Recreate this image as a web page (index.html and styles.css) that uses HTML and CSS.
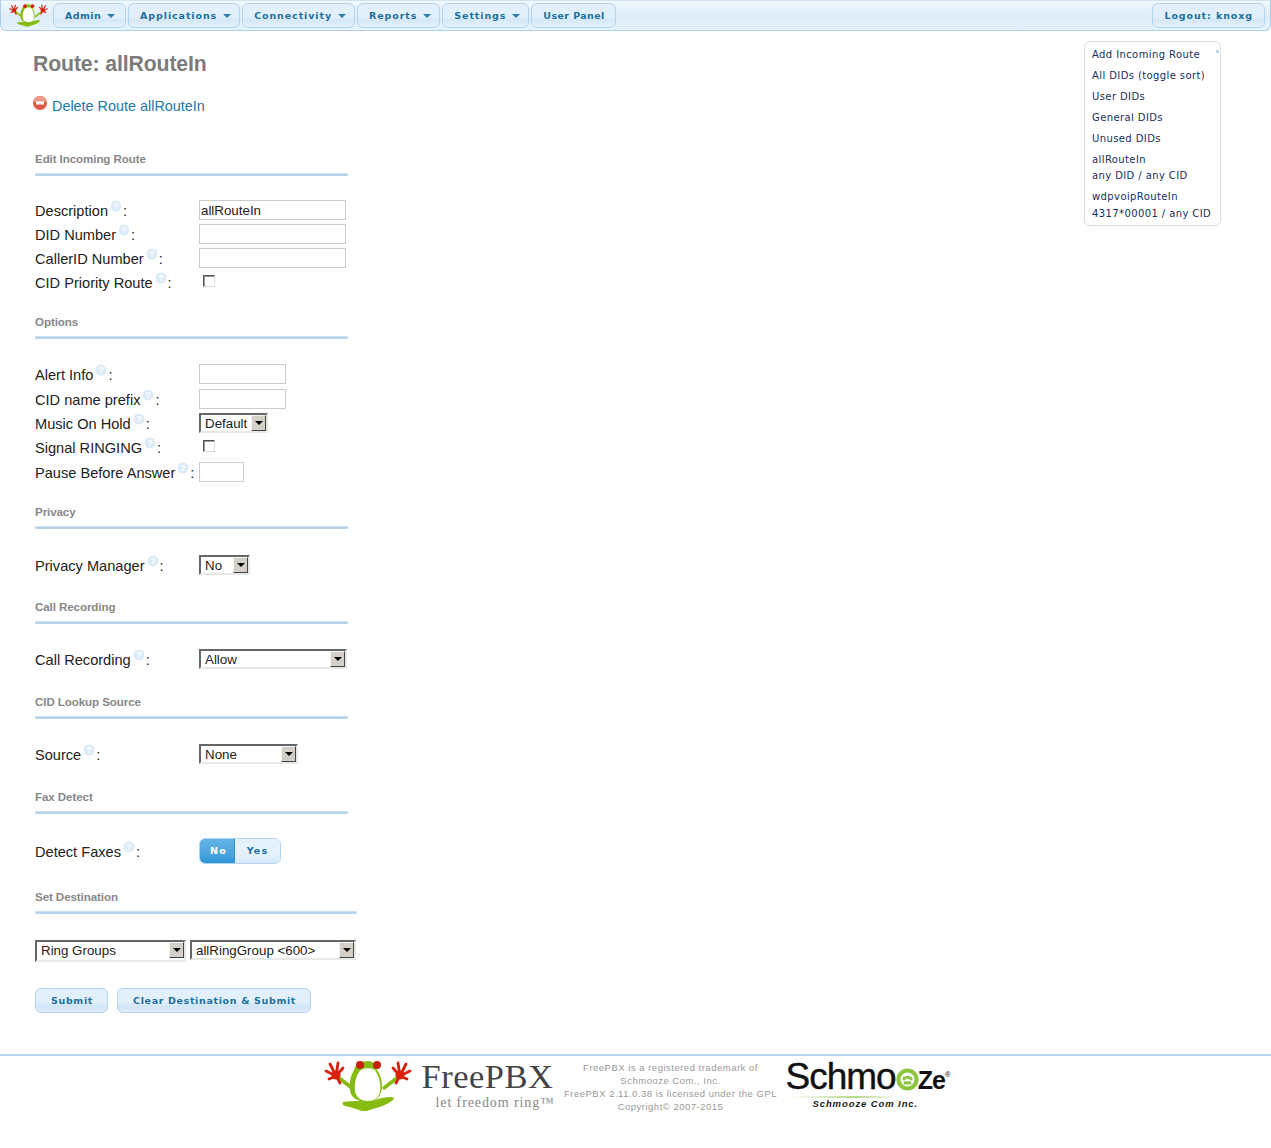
FILE: index.html
```html
<!DOCTYPE html>
<html lang="en">
<head>
<meta charset="utf-8">
<title>Route: allRouteIn</title>
<link rel="stylesheet" href="styles.css">
</head>
<body>
<svg class="defs" width="0" height="0" aria-hidden="true">
  <defs>
    <symbol id="frog" viewBox="0 0 88 52">
      <g fill="none" stroke-linecap="round">
        <path stroke="#86bc12" stroke-width="3.500" d="M28 29 15 19M60 29 73 19"/>
        <g stroke="#d8200c" stroke-width="2.800">
          <path d="M12 17 2 12M12 17 5 20M12 17 6 5M12 17 14 4M12 17 19 9M13 18 16 24"/>
          <path d="M76 17 86 12M76 17 83 20M76 17 82 5M76 17 74 4M76 17 69 9M75 18 72 24"/>
        </g>
        <circle cx="12" cy="16" r="4.500" fill="#d8200c"/>
        <circle cx="76" cy="16" r="4.500" fill="#d8200c"/>
      </g>
      <path fill="#86bc12" d="M44 2c-6 0-13 3-14 9-4 7-6 16-3 24 2 4 6 6 9 7-5 0-12 0-17 1-1 2 0 3 2 4 6 1 11 3 17 5 4 1 7-1 11-2 7-2 14-4 20-9 2-2 0-3-2-3-6 0-12 1-17 4 5-3 8-8 8-15 0-6-2-12-5-16-1-5-4-9-9-9z"/>
      <path fill="#fff" d="M44 9c-3 0-7 1-9 4-3 5-5 12-4 19 1 7 7 10 13 10s11-3 12-10c1-7-1-14-4-19-2-3-5-4-8-4z"/>
      <path fill="none" stroke="#d9ecac" stroke-width="1.200" d="M36 12c4-3 12-3 16 0"/>
      <circle cx="36" cy="6" r="4" fill="#c8200c"/><circle cx="53" cy="6" r="4" fill="#c8200c"/>
    </symbol>
    <symbol id="help" viewBox="0 0 12 12">
      <circle cx="6" cy="6" r="5.500" fill="#dcebf8"/>
      <text x="6" y="9" class="help-mark">?</text>
    </symbol>
  </defs>
</svg>

<nav class="topbar">
  <svg class="nav-frog"><use href="#frog"/></svg>
  <a class="tab tab-tight">Admin<i class="caret"></i></a>
  <a class="tab">Applications<i class="caret"></i></a>
  <a class="tab">Connectivity<i class="caret"></i></a>
  <a class="tab">Reports<i class="caret"></i></a>
  <a class="tab">Settings<i class="caret"></i></a>
  <a class="tab tab-tight">User Panel</a>
  <a class="tab logout">Logout: knoxg</a>
</nav>

<div class="page">
  <main class="content">
    <h2 class="page-title">Route: allRouteIn</h2>
    <p class="delete-line">
      <svg class="delete-icon" viewBox="0 0 14 14"><circle cx="7" cy="7" r="7" fill="#dc5a48"/><path d="M1 6a6 6 0 0 1 12 0z" fill="#ee9a8c"/><rect x="3" y="5.500" width="8" height="3" fill="#fff"/></svg>
      <a class="delete-link">Delete Route allRouteIn</a>
    </p>

    <section class="group first">
      <h5 class="group-title">Edit Incoming Route</h5><hr class="rule">
      <div class="rows rows-first">
        <label class="lbl">Description<svg class="help"><use href="#help"/></svg>:</label><input class="txt wide" value="allRouteIn">
        <label class="lbl">DID Number<svg class="help"><use href="#help"/></svg>:</label><input class="txt wide">
        <label class="lbl">CallerID Number<svg class="help"><use href="#help"/></svg>:</label><input class="txt wide">
        <label class="lbl">CID Priority Route<svg class="help"><use href="#help"/></svg>:</label><span class="check"></span>
      </div>
    </section>

    <section class="group">
      <h5 class="group-title">Options</h5><hr class="rule">
      <div class="rows rows-options">
        <label class="lbl">Alert Info<svg class="help"><use href="#help"/></svg>:</label><input class="txt mid">
        <label class="lbl">CID name prefix<svg class="help"><use href="#help"/></svg>:</label><input class="txt mid">
        <label class="lbl">Music On Hold<svg class="help"><use href="#help"/></svg>:</label><span class="sel w-68">Default<i class="sel-btn"></i></span>
        <label class="lbl">Signal RINGING<svg class="help"><use href="#help"/></svg>:</label><span class="check"></span>
        <label class="lbl">Pause Before Answer<svg class="help"><use href="#help"/></svg>:</label><input class="txt small">
      </div>
    </section>

    <section class="group">
      <h5 class="group-title">Privacy</h5><hr class="rule">
      <div class="rows">
        <label class="lbl">Privacy Manager<svg class="help"><use href="#help"/></svg>:</label><span class="sel w-50">No<i class="sel-btn"></i></span>
      </div>
    </section>

    <section class="group">
      <h5 class="group-title">Call Recording</h5><hr class="rule">
      <div class="rows">
        <label class="lbl">Call Recording<svg class="help"><use href="#help"/></svg>:</label><span class="sel w-147">Allow<i class="sel-btn"></i></span>
      </div>
    </section>

    <section class="group">
      <h5 class="group-title">CID Lookup Source</h5><hr class="rule">
      <div class="rows">
        <label class="lbl">Source<svg class="help"><use href="#help"/></svg>:</label><span class="sel w-98">None<i class="sel-btn"></i></span>
      </div>
    </section>

    <section class="group">
      <h5 class="group-title">Fax Detect</h5><hr class="rule">
      <div class="rows fax">
        <label class="lbl">Detect Faxes<svg class="help"><use href="#help"/></svg>:</label>
        <span class="toggle"><b class="toggle-on">No</b><b class="toggle-off">Yes</b></span>
      </div>
    </section>

    <section class="group dest">
      <h5 class="group-title">Set Destination</h5><hr class="rule rule-long">
      <div class="dest-row">
        <span class="sel w-151">Ring Groups<i class="sel-btn"></i></span>
        <span class="sel w-166">allRingGroup &lt;600&gt;<i class="sel-btn"></i></span>
      </div>
      <div class="actions">
        <button class="btn">Submit</button>
        <button class="btn">Clear Destination &amp; Submit</button>
      </div>
    </section>
  </main>

  <aside class="side">
    <a class="side-item">Add Incoming Route</a>
    <a class="side-item">All DIDs (toggle sort)</a>
    <a class="side-item">User DIDs</a>
    <a class="side-item">General DIDs</a>
    <a class="side-item">Unused DIDs</a>
    <a class="side-item">allRouteIn<br>any DID / any CID</a>
    <a class="side-item">wdpvoipRouteIn<br>4317*00001 / any CID</a>
    <i class="side-dot"></i>
  </aside>
</div>

<footer class="footer">
  <svg class="foot-frog"><use href="#frog"/></svg>
  <div class="brand">
    <div class="brand-name">FreePBX</div>
    <div class="brand-tag">let freedom ring™</div>
  </div>
  <div class="legal">FreePBX is a registered trademark of<br>Schmooze Com., Inc.<br>FreePBX 2.11.0.38 is licensed under the GPL<br>Copyright© 2007-2015</div>
  <div class="schmooze">
    <div class="sch-word">Schmo<svg class="sch-o" viewBox="0 0 28 28"><circle cx="14" cy="14" r="11" fill="none" stroke="#8cc63f" stroke-width="5"/><path d="M8 12c3-3 9-3 12 0v3h-3l-1-2h-4l-1 2H8zM10 16h8l1 4H9z" fill="#8cc63f"/></svg><span class="sch-ze">Ze</span><sup class="sch-r">®</sup></div>
    <div class="sch-line"></div>
    <div class="sch-sub">Schmooze Com Inc.</div>
  </div>
</footer>
</body>
</html>
```
FILE: styles.css
```css
* { box-sizing: border-box; }
html, body { margin: 0; padding: 0; background: #fff; }
body { font-family: "Liberation Sans", Arial, sans-serif; font-size: 14.6px; color: #222; min-height: 1148px; }
.defs { position: absolute; }
.help-mark { font: bold 9px "Liberation Sans", sans-serif; fill: #fff; text-anchor: middle; }

.topbar { height: 31px; display: flex; align-items: flex-start; gap: 2px; padding: 2px 5px 0 8px; border: 1px solid #a9d0ee; border-top-color: #cfe3f5; border-radius: 0 0 6px 6px; background: linear-gradient(#f1f8fd, #dcecf9 60%, #e8f3fb); }
.nav-frog { width: 39px; height: 24px; margin-right: 3px; }
.tab { height: 25px; padding: 0 8px 0 11px; display: flex; align-items: center; gap: 6px; border: 1px solid #b3d4ef; border-radius: 6px; background: linear-gradient(#e2f0fb, #e2f0fb 55%, #d5e8f7 70%, #e4f1fb); font: bold 9.500px "DejaVu Sans", Verdana, sans-serif; letter-spacing: 0.9px; color: #20709f; white-space: nowrap; }
.tab-tight { letter-spacing: 0.4px; padding-right: 10px; }
.caret { width: 0; height: 0; border: 4px solid transparent; border-top: 4px solid #2d7cab; border-bottom: 0; }
.logout { margin-left: auto; padding: 0 11px; }

.page { display: flex; justify-content: space-between; align-items: flex-start; }
.content { width: 360px; padding: 0 0 0 33px; }
.page-title { margin: 20px 0 0; height: 25px; font-size: 21.2px; line-height: 25px; font-weight: bold; color: #7c7c7c; letter-spacing: -0.1px; }
.delete-line { margin: 20px 0 0; height: 20px; display: flex; align-items: flex-start; gap: 5px; font-size: 14.4px; line-height: 20px; }
.delete-icon { width: 14px; height: 14px; }
.delete-link { color: #2079a8; }

.group { margin: 0 0 0 2px; padding-top: 23.700px; }
.group.first { padding-top: 36px; }
.group-title { margin: 0; height: 14px; font-size: 11.6px; line-height: 14px; font-weight: bold; color: #888; letter-spacing: -0.1px; }
.rule { width: 313px; height: 3px; margin: 7px 0 0; border: 0; border-radius: 2px; background: #b4d4ee; box-shadow: inset 0 1px 0 #c9e0f3; }
.rule-long { width: 322px; }
.rows { margin-top: 23px; display: grid; grid-template-columns: 164px auto; justify-content: start; align-items: center; grid-auto-rows: 24.300px; }
.rows-first { margin-top: 22px; margin-bottom: -2.500px; grid-auto-rows: 24px; }
.rows-options { margin-bottom: -2px; }
.lbl { font-size: 14.6px; white-space: nowrap; color: #222; margin-bottom: 1px; }
.help { width: 12px; height: 12px; margin: 0 1px 0 2px; vertical-align: 4px; }
.txt { height: 20px; padding: 0 1px; border: 1px solid #ccc; font: 13.333px "Liberation Sans", sans-serif; color: #222; background: #fff; outline: 0; }
.wide { width: 147px; }
.mid { width: 87px; }
.small { width: 45px; }
.check { width: 12px; height: 12px; margin-left: 4px; margin-top: -2px; border: 1px solid; border-color: #555 #ddd #ddd #555; background: #fff; box-shadow: inset 1px 1px 0 #999; }

.sel { position: relative; display: block; height: 20px; padding-left: 4px; border: 2px solid; border-color: #666 #e8e8e4 #e8e8e4 #666; background: #fff; font-size: 13.333px; line-height: 17px; color: #222; white-space: nowrap; }
.sel-btn { position: absolute; right: 0; top: 0; width: 15px; height: 16px; background: #d4d0c8; border: 1px solid; border-color: #f5f5f2 #444 #444 #f5f5f2; }
.sel-btn::after { content: ""; position: absolute; left: 3px; top: 5px; border: 4px solid transparent; border-top: 4px solid #000; border-bottom: 0; }
.w-68 { width: 69px; }
.w-50 { width: 51px; }
.w-147 { width: 148px; }
.w-98 { width: 99px; }
.w-151 { width: 151px; height: 22px; }
.w-166 { width: 166px; }

.fax { grid-auto-rows: 27px; }
.toggle { display: flex; width: 82px; height: 26px; border-radius: 6px; overflow: hidden; border: 1px solid #b3d4ef; font: bold 9.500px "DejaVu Sans", Verdana, sans-serif; letter-spacing: 1.2px; }
.toggle-on, .toggle-off { display: flex; align-items: center; justify-content: center; }
.toggle-on { width: 36px; padding-left: 3px; margin: -1px 0 -1px -1px; color: #fff; background: linear-gradient(#63b4e6, #4ea6de 55%, #2f95d8); border: 1px solid #2f8ecb; border-radius: 6px 0 0 6px; }
.toggle-off { flex: 1; color: #20709f; background: linear-gradient(#e6f2fb, #e6f2fb 55%, #d5e8f7); }

.dest { padding-top: 25.500px; }
.dest-row { margin-top: 26px; display: flex; align-items: flex-start; gap: 4px; }
.actions { margin-top: 26px; display: flex; gap: 9px; }
.btn { height: 25px; padding: 0 14px 0 15px; border: 1px solid #b3d4ef; border-radius: 6px; background: linear-gradient(#e2f0fb, #e2f0fb 55%, #d2e6f6 75%, #e0eefa); font: bold 9.500px "DejaVu Sans", Verdana, sans-serif; letter-spacing: 0.65px; color: #20709f; }

.side { position: relative; width: 137px; height: 185px; margin: 10px 50px 0 0; border: 1px solid #ddd; border-radius: 6px; padding: 0 0 0 7px; font: 10px/16.500px "DejaVu Sans", Verdana, sans-serif; letter-spacing: 0.4px; color: #14305f; }
.side-item { display: block; margin-top: 4.500px; white-space: nowrap; }
.side-dot { position: absolute; right: 1px; top: 8px; width: 3px; height: 3px; background: #b9d6ef; }

.footer { margin-top: 41px; height: 66px; border-top: 2px solid #b7d5ee; display: flex; align-items: flex-start; justify-content: center; padding-left: 3px; }
.foot-frog { width: 88px; height: 52px; margin-top: 3px; }
.brand { width: 136px; margin-left: 10px; font-family: "Liberation Serif", serif; }
.brand-name { font-size: 34.500px; line-height: 36px; margin-top: 2px; color: #444; letter-spacing: 0.5px; }
.brand-tag { font-size: 14px; line-height: 16px; margin: 1px 0 0 14px; color: #888; letter-spacing: 0.9px; white-space: nowrap; }
.legal { width: 230px; margin: 5px 0 0 -2px; font: 9.500px/13px "Liberation Sans", sans-serif; letter-spacing: 0.5px; color: #999; text-align: center; white-space: nowrap; }
.schmooze { width: 160px; margin: 0 5px 0 0; color: #111; }
.sch-word { display: flex; align-items: center; height: 38px; margin-top: 2px; font-size: 37px; line-height: 38px; letter-spacing: -1px; white-space: nowrap; -webkit-text-stroke: 0.4px #111; }
.sch-o { flex: none; width: 23px; height: 23px; margin-top: 6px; }
.sch-ze { flex: none; font-size: 25px; font-weight: bold; margin: 7px 0 0 -1px; -webkit-text-stroke: 0; }
.sch-r { flex: none; font-size: 8px; line-height: 8px; align-self: flex-start; margin: 13px 0 0 0; letter-spacing: 0; -webkit-text-stroke: 0; }
.sch-line { width: 110px; height: 2px; margin-left: 3px; background: linear-gradient(90deg, #fff, #b5d98a 60%, #fff); }
.sch-sub { font: italic bold 9.500px "Liberation Sans", sans-serif; letter-spacing: 0.9px; margin: 0 0 0 27px; color: #222; white-space: nowrap; }
```
